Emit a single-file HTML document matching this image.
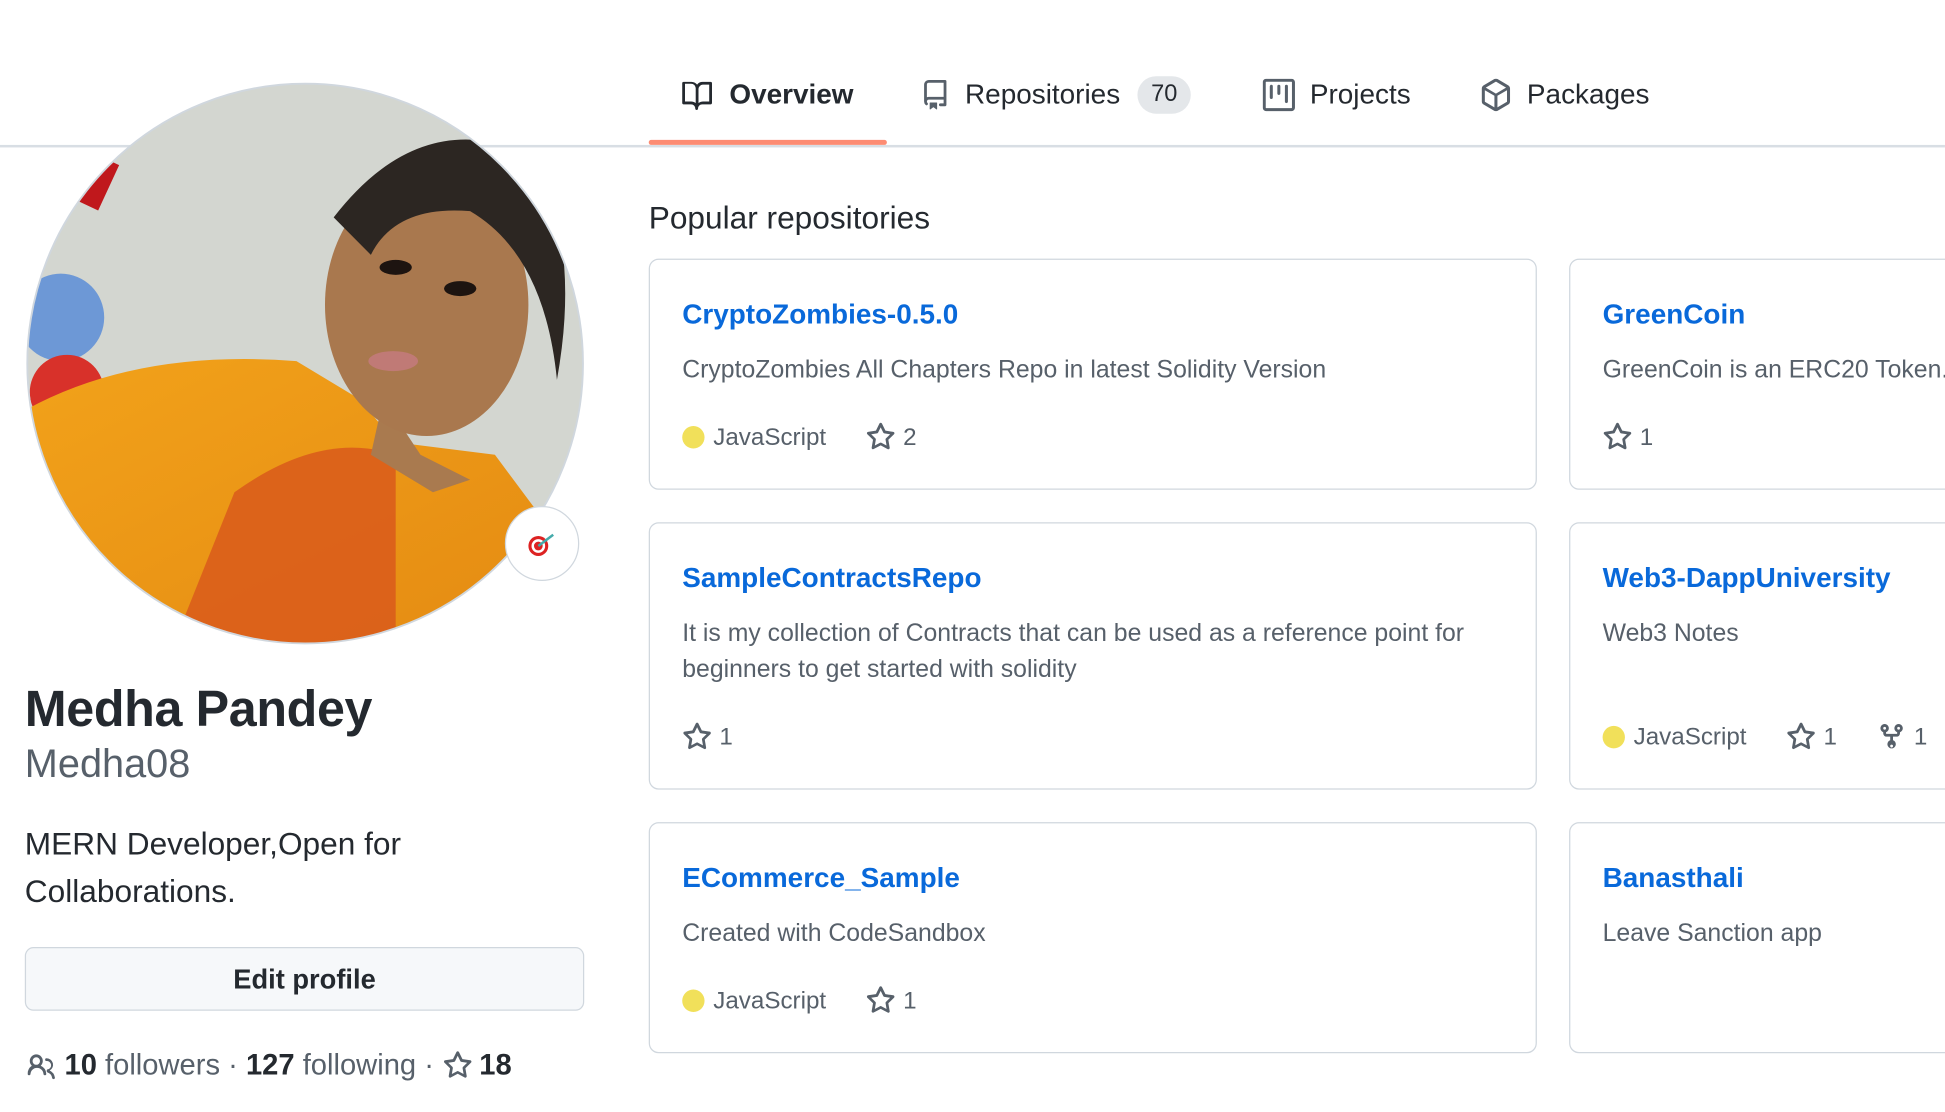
<!DOCTYPE html>
<html><head><meta charset="utf-8"><style>
html,body{margin:0;padding:0;background:#fff;overflow:hidden;width:1945px;height:1112px}
#w{position:absolute;left:0;top:0;width:1568px;height:890px;transform-origin:0 0;transform:scale(1.2404,1.2494);font-family:"Liberation Sans",sans-serif;color:#24292f}
.a{position:absolute;white-space:nowrap}
.tab{position:absolute;top:63px;font-size:22.5px;color:#24292f;display:flex;align-items:center;gap:12px}
.card{position:absolute;border:1.5px solid #d0d7de;border-radius:8px;box-sizing:border-box}
.t{position:absolute;left:26px;top:31px;font-size:22.5px;font-weight:bold;color:#0969da}
.d{position:absolute;left:26px;top:74px;font-size:20px;color:#57606a;line-height:29px;white-space:normal;width:665px}
.m{position:absolute;left:26px;font-size:19.5px;color:#57606a;display:flex;align-items:center}
.dot{width:18px;height:18px;border-radius:50%;background:#f1e05a;display:inline-block;margin-right:7px}
svg.s{width:24px;height:24px;margin-right:6px}
</style></head><body><div id="w">
<div class="a" style="left:0;top:116px;width:1568px;height:1.5px;background:#d8dee4"></div>
<div class="a" style="left:523px;top:112px;width:192px;height:4px;background:#fd8c73;border-radius:2px"></div>
<div class="tab" style="left:548px;font-weight:bold"><svg width="28" height="24" viewBox="0 0 16 16"><path fill="#24292f" d="M0 1.75A.75.75 0 0 1 .75 1h4.25c1.2 0 2.27.57 3 1.46A3.73 3.73 0 0 1 11 1h4.25a.75.75 0 0 1 .75.75v10.5a.75.75 0 0 1-.75.75h-4.5a2.25 2.25 0 0 0-2.25 2.25.75.75 0 0 1-1.5 0A2.25 2.25 0 0 0 4.75 13H.75a.75.75 0 0 1-.75-.75Zm7.25 2.5a2.5 2.5 0 0 0-2.5-2.25H1.5v9.5h3.25c.9 0 1.73.3 2.5.8Zm1.5 8.05c.77-.5 1.6-.8 2.5-.8h3.25V2.5H11a2.5 2.5 0 0 0-2.25 2.25Z"/></svg>Overview</div>
<div class="tab" style="left:742px;top:61px"><svg width="24" height="26" viewBox="0 0 16 16"><path fill="#57606a" d="M2 2.5A2.5 2.5 0 0 1 4.5 0h8.75a.75.75 0 0 1 .75.75v12.5a.75.75 0 0 1-.75.75h-2.5a.75.75 0 0 1 0-1.5h1.75v-2h-8a1 1 0 0 0-.7 1.7.75.75 0 1 1-1.07 1.05A2.5 2.5 0 0 1 2 11.5Zm10.5-1h-8a1 1 0 0 0-1 1v6.7a2.5 2.5 0 0 1 1-.2h8ZM5 12.25a.25.25 0 0 1 .25-.25h3.5a.25.25 0 0 1 .25.25v3.25a.25.25 0 0 1-.4.2l-1.45-1.08a.25.25 0 0 0-.3 0L5.4 15.7a.25.25 0 0 1-.4-.2Z"/></svg>Repositories<span style="background:#e4e7ea;border-radius:16px;padding:4px 11px;font-size:19px;margin-left:2px">70</span></div>
<div class="tab" style="left:1018px"><svg width="26" height="26" viewBox="0 0 16 16"><path fill="#57606a" d="M1.75 0h12.5C15.2 0 16 .78 16 1.75v12.5A1.75 1.75 0 0 1 14.25 16H1.75A1.75 1.75 0 0 1 0 14.25V1.75C0 .78.78 0 1.75 0ZM1.5 1.75v12.5c0 .14.11.25.25.25h12.5a.25.25 0 0 0 .25-.25V1.75a.25.25 0 0 0-.25-.25H1.75a.25.25 0 0 0-.25.25ZM11.75 3a.75.75 0 0 1 .75.75v7.5a.75.75 0 0 1-1.5 0v-7.5a.75.75 0 0 1 .75-.75Zm-8.25.75a.75.75 0 0 1 1.5 0v5.5a.75.75 0 0 1-1.5 0ZM8 3a.75.75 0 0 1 .75.75v3.5a.75.75 0 0 1-1.5 0v-3.5A.75.75 0 0 1 8 3Z"/></svg>Projects</div>
<div class="tab" style="left:1193px"><svg width="26" height="26" viewBox="0 0 16 16"><path fill="#57606a" d="m8.88.22 5.25 3.06c.55.32.87.9.87 1.52v6.4c0 .62-.32 1.2-.87 1.52l-5.25 3.06a1.75 1.75 0 0 1-1.76 0l-5.25-3.06A1.75 1.75 0 0 1 1 11.2V4.8c0-.62.32-1.2.87-1.52L7.12.22a1.75 1.75 0 0 1 1.76 0ZM7.88 1.52 2.97 4.38 8 7.32l5.03-2.94L8.13 1.52a.25.25 0 0 0-.25 0ZM2.5 5.68v5.52c0 .09.05.17.12.21l4.63 2.7V8.4Zm6.25 8.43 4.63-2.7a.25.25 0 0 0 .12-.21V5.68L8.75 8.4Z"/></svg>Packages</div>

<svg class="a" style="left:19px;top:64px" width="454" height="454" viewBox="0 0 454 454">
<defs><clipPath id="c"><circle cx="227" cy="227" r="224"/></clipPath>
<linearGradient id="o" x1="0" y1="0" x2="1" y2="1"><stop offset="0" stop-color="#f2a21a"/><stop offset="1" stop-color="#e48a12"/></linearGradient></defs>
<g clip-path="url(#c)">
<rect width="454" height="454" fill="#d3d6d0"/>
<rect x="40" y="60" width="30" height="40" fill="#c0181c" transform="rotate(25 55 80)"/>
<circle cx="30" cy="190" r="35" fill="#6d98d6"/>
<circle cx="35" cy="250" r="30" fill="#d8312a"/>
<path d="M0 265 Q90 215 220 225 L270 255 L300 290 L380 300 L440 380 L454 454 L0 454Z" fill="url(#o)"/>
<path d="M170 330 Q240 280 300 300 L300 454 L120 454Z" fill="#d8561c" opacity=".8"/>
<path d="M290 255 L320 300 L360 320 L330 330 L280 300Z" fill="#a97a4f"/>
<ellipse cx="325" cy="180" rx="82" ry="105" fill="#a9784e"/>
<path d="M250 110 Q320 20 410 60 Q450 130 430 240 Q420 140 360 105 Q300 100 280 140Z" fill="#2c2622"/>
<ellipse cx="300" cy="150" rx="13" ry="6" fill="#1d1410"/><ellipse cx="352" cy="167" rx="13" ry="6" fill="#1d1410"/>
<ellipse cx="298" cy="225" rx="20" ry="8" fill="#c07a76"/>
</g>
<circle cx="227" cy="227" r="224" fill="none" stroke="#d0d7de" stroke-width="1.5"/>
</svg>
<div class="a" style="left:407px;top:405px;width:58px;height:58px;border-radius:50%;background:#fff;border:1.5px solid #d0d7de;display:flex;align-items:center;justify-content:center">
<svg width="26" height="22" viewBox="0 0 26 22"><circle cx="10" cy="13" r="8" fill="#d22"/><circle cx="10" cy="13" r="5.5" fill="#fff"/><circle cx="10" cy="13" r="3.5" fill="#d22"/><path d="M10 13 L22 4" stroke="#4aa" stroke-width="2"/></svg></div>

<div class="a" style="left:20px;top:544px;font-size:40.5px;font-weight:bold;color:#24292f;letter-spacing:-0.3px">Medha Pandey</div>
<div class="a" style="left:20px;top:593px;font-size:32px;color:#57606a">Medha08</div>
<div class="a" style="left:20px;top:657px;font-size:25.5px;line-height:38px">MERN Developer,Open for<br>Collaborations.</div>
<div class="a" style="left:20px;top:758px;width:451px;height:51px;box-sizing:border-box;border:1.5px solid #d0d7de;border-radius:7px;background:#f6f8fa;font-size:22px;font-weight:bold;display:flex;align-items:center;justify-content:center">Edit profile</div>
<div class="a" style="left:20px;top:839px;font-size:23.5px;color:#57606a;display:flex;align-items:center">
<svg width="26" height="24" viewBox="0 0 16 16" style="margin-right:6px"><path fill="#57606a" d="M2 5.5a3.5 3.5 0 1 1 5.9 2.5 5 5 0 0 1 2.97 4.27.75.75 0 0 1-1.5.1 3.5 3.5 0 0 0-6.98 0 .75.75 0 0 1-1.5-.1A5 5 0 0 1 3.1 8 3.5 3.5 0 0 1 2 5.5ZM11 4a3.5 3.5 0 0 1 1.7 6.57A5 5 0 0 1 15.5 14.3a.75.75 0 0 1-1.5.2 3.5 3.5 0 0 0-2.4-2.9.75.75 0 0 1-.5-.7v-.3a.75.75 0 0 1 .4-.66A2 2 0 0 0 11 5.5.75.75 0 0 1 11 4Zm-5.5-.5a2 2 0 1 0 0 4 2 2 0 0 0 0-4Z"/></svg>
<b style="color:#24292f">10</b>&nbsp;followers&nbsp;·&nbsp;<b style="color:#24292f">127</b>&nbsp;following&nbsp;·&nbsp;<svg width="26" height="24" viewBox="0 0 16 16" style="margin-right:4px"><path fill="#57606a" d="M8 .25a.75.75 0 0 1 .67.42l1.88 3.8 4.2.61a.75.75 0 0 1 .41 1.28l-3.04 2.96.72 4.18a.75.75 0 0 1-1.09.79L8 12.3l-3.75 1.98a.75.75 0 0 1-1.09-.79l.72-4.18L.84 6.36a.75.75 0 0 1 .41-1.28l4.2-.61L7.33.67A.75.75 0 0 1 8 .25Zm0 2.45L6.6 5.53a.75.75 0 0 1-.56.41l-3.13.46 2.26 2.2a.75.75 0 0 1 .22.66l-.54 3.12 2.8-1.47a.75.75 0 0 1 .7 0l2.8 1.47-.54-3.12a.75.75 0 0 1 .22-.66l2.26-2.2-3.13-.46a.75.75 0 0 1-.56-.41Z"/></svg><b style="color:#24292f">18</b></div>

<div class="a" style="left:523px;top:161px;font-size:25.5px">Popular repositories</div>

<svg width="0" height="0" style="position:absolute"><defs><path id="st" fill="#57606a" d="M8 .25a.75.75 0 0 1 .67.42l1.88 3.8 4.2.61a.75.75 0 0 1 .41 1.28l-3.04 2.96.72 4.18a.75.75 0 0 1-1.09.79L8 12.3l-3.75 1.98a.75.75 0 0 1-1.09-.79l.72-4.18L.84 6.36a.75.75 0 0 1 .41-1.28l4.2-.61L7.33.67A.75.75 0 0 1 8 .25Zm0 2.45L6.6 5.53a.75.75 0 0 1-.56.41l-3.13.46 2.26 2.2a.75.75 0 0 1 .22.66l-.54 3.12 2.8-1.47a.75.75 0 0 1 .7 0l2.8 1.47-.54-3.12a.75.75 0 0 1 .22-.66l2.26-2.2-3.13-.46a.75.75 0 0 1-.56-.41Z"/></defs></svg>

<div class="card" style="left:523px;top:207px;width:716px;height:185px"><div class="t">CryptoZombies-0.5.0</div><div class="d">CryptoZombies All Chapters Repo in latest Solidity Version</div><div class="m" style="top:130px"><span class="dot"></span>JavaScript<span style="width:32px"></span><svg class="s" viewBox="0 0 16 16"><use href="#st"/></svg>2</div></div>
<div class="card" style="left:1265px;top:207px;width:400px;height:185px"><div class="t">GreenCoin</div><div class="d">GreenCoin is an ERC20 Token.</div><div class="m" style="top:130px"><svg class="s" viewBox="0 0 16 16"><use href="#st"/></svg>1</div></div>
<div class="card" style="left:523px;top:418px;width:716px;height:214px"><div class="t">SampleContractsRepo</div><div class="d">It is my collection of Contracts that can be used as a reference point for beginners to get started with solidity</div><div class="m" style="top:159px"><svg class="s" viewBox="0 0 16 16"><use href="#st"/></svg>1</div></div>
<div class="card" style="left:1265px;top:418px;width:400px;height:214px"><div class="t">Web3-DappUniversity</div><div class="d">Web3 Notes</div><div class="m" style="top:159px"><span class="dot"></span>JavaScript<span style="width:32px"></span><svg class="s" viewBox="0 0 16 16"><use href="#st"/></svg>1<span style="width:32px"></span><svg class="s" viewBox="0 0 16 16"><path fill="#57606a" d="M5 5.37v.63c0 .14.11.25.25.25h5.5a.25.25 0 0 0 .25-.25v-.63a2.25 2.25 0 1 1 1.5 0V6a1.75 1.75 0 0 1-1.75 1.75h-2v1.88a2.25 2.25 0 1 1-1.5 0V7.75h-2A1.75 1.75 0 0 1 3.5 6v-.63a2.25 2.25 0 1 1 1.5 0ZM5 3.25a.75.75 0 1 0-1.5 0 .75.75 0 0 0 1.5 0Zm6.75.75a.75.75 0 1 0 0-1.5.75.75 0 0 0 0 1.5Zm-3 8.75a.75.75 0 1 0-1.5 0 .75.75 0 0 0 1.5 0Z"/></svg>1</div></div>
<div class="card" style="left:523px;top:658px;width:716px;height:185px"><div class="t">ECommerce_Sample</div><div class="d">Created with CodeSandbox</div><div class="m" style="top:130px"><span class="dot"></span>JavaScript<span style="width:32px"></span><svg class="s" viewBox="0 0 16 16"><use href="#st"/></svg>1</div></div>
<div class="card" style="left:1265px;top:658px;width:400px;height:185px"><div class="t">Banasthali</div><div class="d">Leave Sanction app</div></div>
</div></body></html>
